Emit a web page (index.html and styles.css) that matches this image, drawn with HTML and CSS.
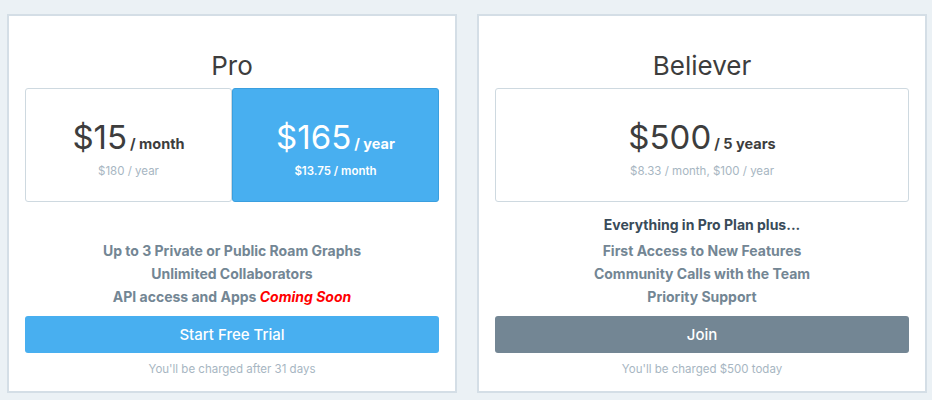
FILE: index.html
```html
<!DOCTYPE html>
<html>
<head>
<meta charset="utf-8">
<link rel="stylesheet" href="styles.css">
</head>
<body>
<div class="plans">
  <div class="card">
    <div class="title">Pro</div>
    <div class="prices">
      <div class="price">
        <div class="amount"><span class="big">$15</span><span class="per">/ month</span></div>
        <div class="sub">$180 / year</div>
      </div>
      <div class="price selected">
        <div class="amount"><span class="big">$165</span><span class="per">/ year</span></div>
        <div class="sub">$13.75 / month</div>
      </div>
    </div>
    <div class="features">
      <div class="lead">&nbsp;</div>
      <div class="item">Up to 3 Private or Public Roam Graphs</div>
      <div class="item">Unlimited Collaborators</div>
      <div class="item">API access and Apps <em class="soon">Coming Soon</em></div>
    </div>
    <button class="btn btn-blue">Start Free Trial</button>
    <div class="note">You'll be charged after 31 days</div>
  </div>
  <div class="card">
    <div class="title">Believer</div>
    <div class="prices">
      <div class="price">
        <div class="amount"><span class="big">$500</span><span class="per">/ 5 years</span></div>
        <div class="sub">$8.33 / month, $100 / year</div>
      </div>
    </div>
    <div class="features">
      <div class="lead">Everything in Pro Plan plus...</div>
      <div class="item">First Access to New Features</div>
      <div class="item">Community Calls with the Team</div>
      <div class="item">Priority Support</div>
    </div>
    <button class="btn btn-gray">Join</button>
    <div class="note">You'll be charged $500 today</div>
  </div>
</div>
</body>
</html>
```

FILE: styles.css
```css
* { box-sizing: border-box; }
html, body { margin: 0; padding: 0; }
body {
  background: #ebf1f5;
  font-family: Inter, "Noto Sans", sans-serif;
  color: #394b59;
  width: 932px;
  height: 400px;
  overflow: hidden;
}
.plans {
  display: flex;
  gap: 20px;
  padding: 14px 5px 0 7px;
}
.card {
  width: 450px;
  background: #fff;
  border: 2px solid #d4dee6;
  padding: 16px 16px 13px;
  display: flex;
  flex-direction: column;
  text-align: center;
}
.title {
  font-size: 26px;
  line-height: 32px;
  margin: 18px 0 6px;
  color: #3d3d3d;
  font-weight: 400;
}
.prices {
  display: flex;
  height: 114px;
}
.price {
  flex: 1;
  border: 1px solid #ced9e0;
  border-radius: 3px;
  display: flex;
  flex-direction: column;
  justify-content: center;
  align-items: center;
  padding-top: 5px;
}
.price.selected {
  background: #48aff0;
  border-color: #3a9fdf;
  color: #fff;
}
.amount {
  display: flex;
  align-items: baseline;
  line-height: 40px;
}
.big {
  font-size: 33px;
  font-weight: 400;
  color: #3d3d3d;
}
.per {
  font-size: 14.5px;
  font-weight: 700;
  margin-left: 3px;
  color: #3d3d3d;
}
.selected .big, .selected .per { color: #fff; }
.sub {
  font-size: 11.5px;
  line-height: 16px;
  color: #a7b6c2;
  margin-top: -1px;
}
.selected .sub {
  color: #fff;
  font-weight: 600;
}
.features {
  margin-top: 11px;
  font-size: 14px;
  font-weight: 700;
  line-height: 23px;
  color: #738694;
}
.lead {
  color: #394b59;
  margin-bottom: 3px;
}
.soon {
  color: #ff0000;
  font-style: italic;
}
.btn {
  margin-top: 8px;
  height: 37px;
  border: none;
  border-radius: 3px;
  color: #fff;
  font-family: Inter, "Noto Sans", sans-serif;
  font-size: 15px;
  font-weight: 500;
  width: 100%;
}
.btn-blue { background: #48aff0; }
.btn-gray { background: #738694; }
.note {
  margin-top: 7px;
  font-size: 11.5px;
  line-height: 18px;
  color: #a7b6c2;
}
```
